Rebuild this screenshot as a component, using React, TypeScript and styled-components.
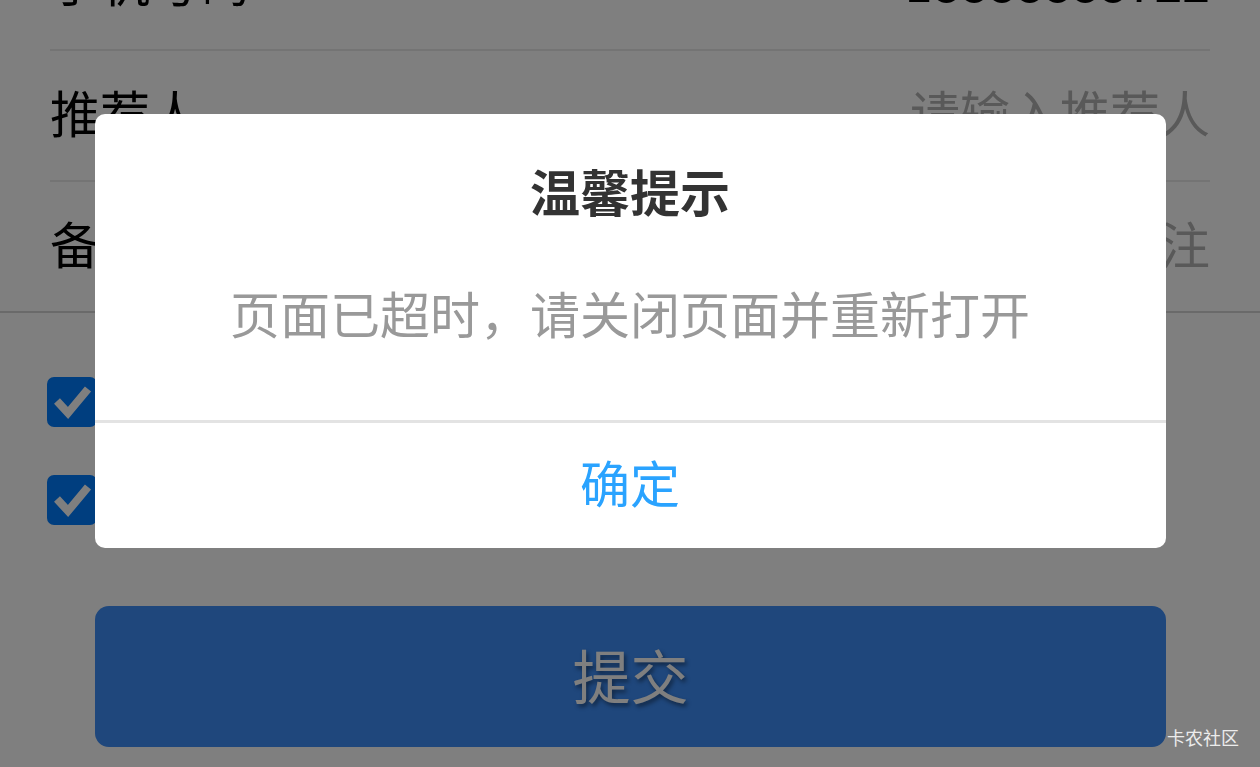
import * as React from "react";
import styled, { createGlobalStyle } from "styled-components";

const GlobalStyle = createGlobalStyle`
  html, body {
    margin: 0;
    padding: 0;
    background: #ffffff;
  }
  body {
    font-family: "Noto Sans CJK SC", "Noto Sans", sans-serif;
  }
`;

const Screen = styled.div`
  position: relative;
  width: 1260px;
  height: 767px;
  overflow: hidden;
  background: #ffffff;
`;

/* the page is scrolled: the first row sits partly above the viewport */
const FormGroup = styled.div`
  margin-top: -80px;
  border-bottom: 2px solid #d4d4d4;
`;

const FieldRow = styled.div<{ $last?: boolean }>`
  display: flex;
  align-items: center;
  justify-content: space-between;
  margin: 0 50px;
  padding-bottom: 10px;
  box-sizing: border-box;
  border-bottom: ${p => (p.$last ? "none" : "2px solid #e8e8e8")};
  height: ${p => (p.$last ? "129px" : "131px")};
`;

const FieldLabel = styled.span`
  font-size: 50px;
  line-height: 60px;
  color: #000000;
`;

const FieldValue = styled.span<{ $placeholder?: boolean }>`
  font-size: 50px;
  line-height: 60px;
  color: ${p => (p.$placeholder ? "#b3b3b3" : "#000000")};
`;

const Agreements = styled.div`
  display: flex;
  flex-direction: column;
  gap: 48px;
  padding: 64px 0 0 47px;
`;

const AgreeRow = styled.label`
  display: flex;
  align-items: center;
  gap: 18px;
  height: 50px;
`;

const CheckBox = styled.span`
  display: flex;
  align-items: center;
  justify-content: center;
  flex: none;
  width: 50px;
  height: 50px;
  border-radius: 7px;
  background: #007cff;
`;

const AgreeText = styled.span`
  font-size: 36px;
  line-height: 50px;
  color: #333333;
`;

const SubmitButton = styled.button`
  display: block;
  width: 1071px;
  height: 141px;
  margin: 81px 0 0 95px;
  padding: 0 0 5px;
  border: none;
  border-radius: 14px;
  background: #3e8ef8;
  color: #ffffff;
  font-family: "Noto Sans CJK SC", sans-serif;
  font-size: 58px;
  text-shadow: 2px 3px 4px rgba(0, 0, 0, 0.45);
`;

const Mask = styled.div`
  position: absolute;
  inset: 0;
  display: flex;
  justify-content: center;
  align-items: flex-start;
  padding-top: 114px;
  background: rgba(0, 0, 0, 0.5);
`;

const Dialog = styled.div`
  width: 1071px;
  border-radius: 10px;
  background: #ffffff;
  overflow: hidden;
  text-align: center;
`;

const DialogTitle = styled.div`
  padding-top: 46px;
  font-size: 50px;
  line-height: 60px;
  font-weight: 700;
  color: #333333;
`;

const DialogMessage = styled.div`
  padding: 62px 0 78px;
  font-size: 50px;
  line-height: 60px;
  color: #999999;
`;

const DialogFooter = styled.div`
  display: flex;
  align-items: center;
  justify-content: center;
  height: 128px;
  padding-bottom: 10px;
  box-sizing: border-box;
  border-top: 3px solid #e3e3e3;
`;

const ConfirmButton = styled.span`
  font-size: 50px;
  line-height: 60px;
  color: #2aa3ff;
`;

const Watermark = styled.span`
  position: absolute;
  right: 21px;
  bottom: 18px;
  font-size: 18px;
  line-height: 24px;
  color: #ececec;
`;

const CheckIcon = () => (
  <svg width="50" height="50" viewBox="0 0 50 50">
    <polyline
      points="10,24 21,36 41,12"
      fill="none"
      stroke="#ffffff"
      strokeWidth="8"
    />
  </svg>
);

const fields = [
  { label: "手机号码", value: "18888888722", placeholder: false },
  { label: "推荐人", value: "请输入推荐人", placeholder: true },
  { label: "备注", value: "请输入备注", placeholder: true }
];

const App: React.FC = () => (
  <Screen>
    <GlobalStyle />
    <FormGroup>
      {fields.map((f, i) => (
        <FieldRow key={f.label} $last={i === fields.length - 1}>
          <FieldLabel>{f.label}</FieldLabel>
          <FieldValue $placeholder={f.placeholder}>{f.value}</FieldValue>
        </FieldRow>
      ))}
    </FormGroup>

    <Agreements>
      <AgreeRow>
        <CheckBox>
          <CheckIcon />
        </CheckBox>
        <AgreeText>我已阅读并同意《用户协议》</AgreeText>
      </AgreeRow>
      <AgreeRow>
        <CheckBox>
          <CheckIcon />
        </CheckBox>
        <AgreeText>我已阅读并同意《隐私政策》</AgreeText>
      </AgreeRow>
    </Agreements>

    <SubmitButton>提交</SubmitButton>

    <Mask>
      <Dialog>
        <DialogTitle>温馨提示</DialogTitle>
        <DialogMessage>页面已超时，请关闭页面并重新打开</DialogMessage>
        <DialogFooter>
          <ConfirmButton>确定</ConfirmButton>
        </DialogFooter>
      </Dialog>
    </Mask>

    <Watermark>卡农社区</Watermark>
  </Screen>
);

export default App;
